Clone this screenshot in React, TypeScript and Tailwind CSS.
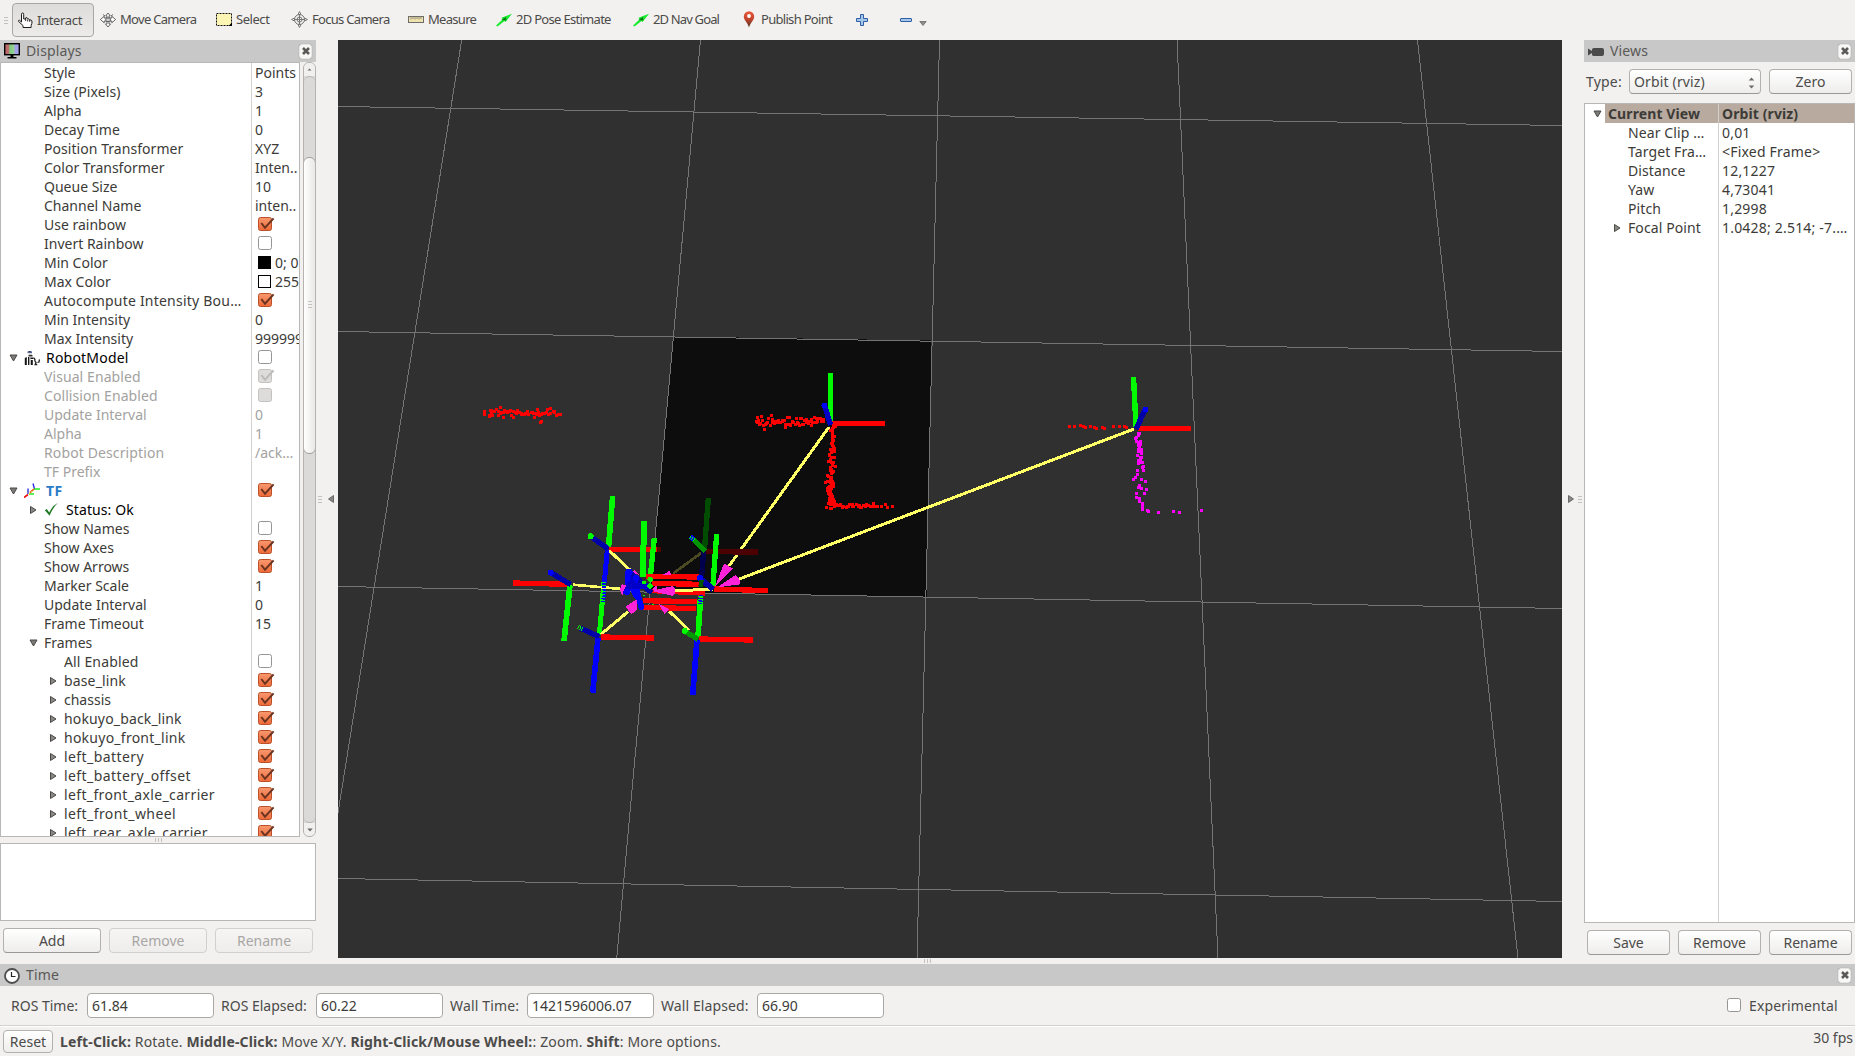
import React from "react";

type Check = "on" | "off" | "disabledOn" | "disabledOff";
type Row = {
  name: string;
  level?: 0 | 1 | 2;
  arrow?: "open" | "closed";
  icon?: "robot" | "tf" | "ok";
  value?: string;
  check?: Check;
  swatch?: "black" | "white";
  dim?: boolean;
  tone?: string;
  track?: string;
};

const ROWS: Row[] = [
  { name: "Style", value: "Points" },
  { name: "Size (Pixels)", value: "3", track: "tracking-[0.1px]" },
  { name: "Alpha", value: "1" },
  { name: "Decay Time", value: "0" },
  { name: "Position Transformer", value: "XYZ", track: "tracking-[0.05px]" },
  { name: "Color Transformer", value: "Inten.." },
  { name: "Queue Size", value: "10" },
  { name: "Channel Name", value: "inten.." },
  { name: "Use rainbow", check: "on" },
  { name: "Invert Rainbow", check: "off" },
  { name: "Min Color", swatch: "black", value: "0; 0" },
  { name: "Max Color", swatch: "white", value: "255" },
  { name: "Autocompute Intensity Bou…", check: "on", track: "tracking-[0.22px]" },
  { name: "Min Intensity", value: "0" },
  { name: "Max Intensity", value: "999999" },
  { name: "RobotModel", level: 0, arrow: "open", icon: "robot", check: "off", tone: "text-black", track: "tracking-[0.2px]" },
  { name: "Visual Enabled", dim: true, check: "disabledOn", track: "tracking-[0.08px]" },
  { name: "Collision Enabled", dim: true, check: "disabledOff", track: "tracking-[0.08px]" },
  { name: "Update Interval", dim: true, value: "0" },
  { name: "Alpha", dim: true, value: "1" },
  { name: "Robot Description", dim: true, value: "/ack…", track: "tracking-[0.12px]" },
  { name: "TF Prefix", dim: true },
  { name: "TF", level: 0, arrow: "open", icon: "tf", check: "on", tone: "font-bold text-[#2a7bc8]", track: "tracking-[0.5px]" },
  { name: "Status: Ok", arrow: "closed", icon: "ok", tone: "text-black", track: "tracking-[0.1px]" },
  { name: "Show Names", check: "off" },
  { name: "Show Axes", check: "on" },
  { name: "Show Arrows", check: "on" },
  { name: "Marker Scale", value: "1" },
  { name: "Update Interval", value: "0" },
  { name: "Frame Timeout", value: "15" },
  { name: "Frames", arrow: "open" },
  { name: "All Enabled", level: 2, check: "off", track: "tracking-[0.15px]" },
  { name: "base_link", level: 2, arrow: "closed", check: "on", track: "tracking-[0.15px]" },
  { name: "chassis", level: 2, arrow: "closed", check: "on" },
  { name: "hokuyo_back_link", level: 2, arrow: "closed", check: "on", track: "tracking-[0.15px]" },
  { name: "hokuyo_front_link", level: 2, arrow: "closed", check: "on", track: "tracking-[0.25px]" },
  { name: "left_battery", level: 2, arrow: "closed", check: "on", track: "tracking-[0.42px]" },
  { name: "left_battery_offset", level: 2, arrow: "closed", check: "on", track: "tracking-[0.42px]" },
  { name: "left_front_axle_carrier", level: 2, arrow: "closed", check: "on", track: "tracking-[0.36px]" },
  { name: "left_front_wheel", level: 2, arrow: "closed", check: "on", track: "tracking-[0.42px]" },
  { name: "left_rear_axle_carrier", level: 2, arrow: "closed", check: "on", track: "tracking-[0.3px]" },
];

function Arrow({ dir }: { dir?: "open" | "closed" }) {
  return (
    <svg className="h-[12px] w-[12px] shrink-0" viewBox="0 0 12 12">
      {dir === "open" && <path d="M2 3h7L5.5 9z" fill="#7d7b78" stroke="#4a4947" strokeWidth="1" />}
      {dir === "closed" && <path d="M2.5 2.5v7L8 6z" fill="#8a8885" stroke="#4a4947" strokeWidth="1" />}
    </svg>
  );
}

function CheckBox({ state }: { state: Check }) {
  const on = state === "on";
  const dis = state === "disabledOn" || state === "disabledOff";
  return (
    <svg className="h-[17px] w-[17px] shrink-0 overflow-visible" viewBox="0 0 17 17">
      <defs>
        <linearGradient id="ck" x1="0" y1="0" x2="0" y2="1">
          <stop offset="0" stopColor="#f8986f" />
          <stop offset="1" stopColor="#ee6a38" />
        </linearGradient>
      </defs>
      <rect
        x="1.5"
        y="1.5"
        width="13"
        height="13"
        rx="2"
        fill={on ? "url(#ck)" : dis ? "#dddcdb" : "#ffffff"}
        stroke={on ? "#bb5029" : dis ? "#c4c2c0" : "#979593"}
      />
      {on && <path d="M4.300 7L8 11.800 16.600 2.400" fill="none" stroke="#6b3421" strokeWidth="2" />}
      {state === "disabledOn" && <path d="M4.300 7L8 11.800 16.600 2.400" fill="none" stroke="#bdbbb9" strokeWidth="2" />}
    </svg>
  );
}

function RowIcon({ kind }: { kind: "robot" | "tf" | "ok" }) {
  if (kind === "robot")
    return (
      <svg className="mr-[6px] h-[16px] w-[16px] shrink-0" viewBox="0 0 16 16">
        <path d="M3.500 1.800Q5.800 0 8 1.800v1H3.500z" fill="#20306e" />
        <path d="M4.500 3.500h3.500v1.200H4.500z" fill="#b9b9b9" />
        <path d="M4.500 5h4v1.500h-4z" fill="#333" />
        <path d="M.8 8l2-1V15H.8zM4 7h1.300v8H4zM6.300 7.500h3V9h-3zM6.800 10h2v5h-2z" fill="#161616" />
        <path d="M9.500 7.800q1.800.8 1.300 2.500 0 1.500 1.200 2l-.8 2.200h2M13.500 12.500l1.500-.5.500-2.500" stroke="#222" strokeWidth="1.300" fill="none" />
        <path d="M5.900 7v7.500" stroke="#999" strokeWidth=".8" />
      </svg>
    );
  if (kind === "tf")
    return (
      <svg className="mr-[6px] h-[16px] w-[16px] shrink-0" viewBox="0 0 16 16" fill="none" strokeWidth="1.300">
        <path d="M10.500 6L9 .5M4 11V5.500" stroke="#2222dd" />
        <path d="M10 6h6M5 11h5" stroke="#22ee22" />
        <path d="M0 14.500L4 11.500M6 9.500L10 6.200" stroke="#ee1010" strokeWidth="1.600" />
        <path d="M5 11l4.500-4.500" stroke="#dddd22" strokeDasharray="1.500 1" />
      </svg>
    );
  return (
    <svg className="mr-[7px] h-[15px] w-[15px] shrink-0" viewBox="0 0 15 15">
      <path d="M.8 8.300L2.800 7l2.500 3.400Q8.500 3.500 14 .8 8.500 6 5.600 13.800z" fill="#1f7a22" />
    </svg>
  );
}

const PAD = ["pl-[7px]", "pl-[27px]", "pl-[47px]"];

function DisplayRow({ r }: { r: Row }) {
  const level = r.level ?? 1;
  return (
    <div className={`flex h-[19px] shrink-0 ${r.dim ? "text-[#a3a2a0]" : ""}`}>
      <div className={`flex w-[251px] shrink-0 items-center border-r border-[#d4d2cf] ${PAD[level]}`}>
        <Arrow dir={r.arrow} />
        <span className="w-[4px] shrink-0" />
        {r.icon && <RowIcon kind={r.icon} />}
        <span className={`whitespace-pre leading-[19px] ${r.tone ?? ""} ${r.track ?? ""}`}>{r.name}</span>
      </div>
      <div className="flex min-w-0 flex-1 items-center overflow-hidden pl-[3px]">
        {r.check && (
          <span className="pl-[2px]">
            <CheckBox state={r.check} />
          </span>
        )}
        {r.swatch && (
          <span
            className={`mr-[4px] ml-[3px] h-[13px] w-[13px] shrink-0 border border-black ${r.swatch === "black" ? "bg-black" : "bg-white"}`}
          />
        )}
        {r.value && <span className="whitespace-pre leading-[19px]">{r.value}</span>}
      </div>
    </div>
  );
}

function CloseButton() {
  return (
    <span className="flex h-[15px] w-[13px] items-center justify-center rounded-[3px] border border-[#e6e5e4] bg-[#f7f7f6] shadow-[0_0_1px_#888]">
      <svg className="h-[8px] w-[8px]" viewBox="0 0 8 8">
        <path d="M1 1l6 6M7 1L1 7" stroke="#5a5957" strokeWidth="2.600" />
      </svg>
    </span>
  );
}

function DockTitle({ icon, title }: { icon: React.ReactNode; title: string }) {
  return (
    <div className="flex h-[22px] shrink-0 items-center bg-[#c8c8c8] pr-[4px] pl-[4px]">
      {icon}
      <span className="-mt-[2px] ml-[6px] flex-1 tracking-[0.15px] text-[#5a5957]">{title}</span>
      <CloseButton />
    </div>
  );
}

function Button({ label, w, disabled }: { label: string; w: string; disabled?: boolean }) {
  return (
    <button
      className={`flex h-[25px] shrink-0 items-center justify-center rounded-[4px] border bg-linear-to-b ${w} ${
        disabled
          ? "border-[#d2d0ce] from-[#f6f5f4] to-[#eeedec] text-[#a8a6a4]"
          : "border-[#b3b1ae] border-b-[#9a9895] from-white to-[#eeedec] text-[#4c4b49]"
      }`}
    >
      {label}
    </button>
  );
}

function Grip({ vertical }: { vertical?: boolean }) {
  return (
    <span className={`flex gap-[2px] ${vertical ? "flex-col" : ""}`}>
      {[0, 1, 2].map((i) => (
        <span key={i} className={`bg-[#c3c1be] ${vertical ? "h-px w-[4px]" : "h-[4px] w-px"}`} />
      ))}
    </span>
  );
}

/* ---------- toolbar ---------- */

function Tool({ icon, label, w }: { icon: React.ReactNode; label: string; w: string }) {
  return (
    <div className={`flex shrink-0 items-center gap-[4px] ${w}`}>
      {icon}
      <span className="whitespace-pre">{label}</span>
    </div>
  );
}

const PoseArrow = () => (
  <svg className="h-[16px] w-[16px]" viewBox="0 0 16 16">
    <path d="M0 13.500L6.500 7.500 5.500 5.800 16 1.700 9.500 10 8.500 9 1.500 14.500z" fill="#19ea2d" />
    <path d="M5.500 8L10 5l.3 3.500z" fill="#0a7a14" />
  </svg>
);

function Toolbar() {
  return (
    <div className="flex h-[40px] shrink-0 items-start text-[13px] tracking-[-0.7px] text-[#4c4b49]">
      <div className="flex h-[40px] w-[12px] items-center justify-center">
        <Grip vertical />
      </div>
      <div className="mt-[3px] flex h-[34px] w-[82px] shrink-0 items-center rounded-[4px] border border-[#a9a7a4] bg-linear-to-b from-[#dedcda] to-[#ecebe9] pl-[4px]">
        <svg className="h-[17px] w-[17px]" viewBox="0 0 17 17">
          <path
            d="M4.500 10V2.200Q4.500 1 5.600 1 6.700 1 6.700 2.200V7h2V5.800q1.500-.6 1.900.6V7q1.600-.6 2 .6V8q1.700-.5 2.300.8.5 2.500-.8 4.700v2H6v-2L1.600 9.500Q1 8.200 2.400 8.200z"
            fill="#fff"
            stroke="#1c1c1c"
          />
          <path d="M8.700 7v2M10.700 7.500v2M12.700 8v1.800" stroke="#1c1c1c" strokeWidth=".9" />
        </svg>
        <span className="ml-[3px] tracking-[-0.35px]">Interact</span>
      </div>
      <div className="flex h-[39px] items-center pl-[6px]">
        <Tool
          w="w-[116px]"
          label="Move Camera"
          icon={
            <svg className="h-[16px] w-[16px]" viewBox="0 0 16 16" fill="#fff" stroke="#555" strokeWidth=".9">
              <path d="M8 1l2.200 2.800H9V6h2.800V4.300L15.600 7.500l-3.800 3.300V9H9v3h1.500L8 15l-2.500-3H7V9H4.200v1.800L.4 7.500l3.800-3.200V6H7V3.800H5.800z" />
              <rect x="5.800" y="6" width="4.600" height="3.500" rx=".8" fill="#ccc" />
              <path d="M3 2.500l2 1.500M13 2.500l-2 1.500" />
            </svg>
          }
        />
        <Tool
          w="w-[75px] tracking-[-0.45px]"
          label="Select"
          icon={
            <svg className="h-[13px] w-[16px]" viewBox="0 0 16 13">
              <rect x=".5" y=".5" width="15" height="12" fill="#fdf5b4" stroke="#111" strokeDasharray="2 1" />
              <path d="M16 9.500V13h-3.500z" fill="#000" />
            </svg>
          }
        />
        <Tool
          w="w-[117px]"
          label="Focus Camera"
          icon={
            <svg className="h-[17px] w-[17px]" viewBox="0 0 17 17" fill="none" stroke="#777">
              <circle cx="8.500" cy="8.500" r="5" />
              <circle cx="8.500" cy="8.500" r="2.500" />
              <path d="M8.500 .5L10 3.500H7zM8.500 16.500L10 13.500H7zM.5 8.500L3.500 7v3zM16.500 8.500L13.500 7v3z" fill="#eee" />
              <path d="M8.500 4v9M4 8.500h9" />
            </svg>
          }
        />
        <Tool
          w="w-[88px]"
          label="Measure"
          icon={
            <svg className="h-[7px] w-[16px]" viewBox="0 0 16 7">
              <rect x=".5" y=".5" width="15" height="6" fill="#eee2ae" stroke="#6e6c66" />
              <path d="M3 1v2.500M5 1v2M7 1v2.500M9 1v2M11 1v2.500M13 1v2" stroke="#7d7a6b" strokeWidth=".8" />
            </svg>
          }
        />
        <Tool w="w-[137px]" label="2D Pose Estimate" icon={<PoseArrow />} />
        <Tool w="w-[110px] tracking-[-0.85px]" label="2D Nav Goal" icon={<PoseArrow />} />
        <Tool
          w="w-[113px]"
          label="Publish Point"
          icon={
            <svg className="h-[17px] w-[14px]" viewBox="1.500 0 14 17">
              <defs>
                <linearGradient id="pin" x1="0" y1="0" x2="0" y2="1">
                  <stop offset="0" stopColor="#ea5a3a" />
                  <stop offset=".5" stopColor="#c2432b" />
                  <stop offset="1" stopColor="#4a3526" />
                </linearGradient>
              </defs>
              <path d="M7.500 16.500C6.500 12 2.300 9.500 2.300 5.500a5.200 5.200 0 0110.400 0c0 4-4.200 6.500-5.200 11z" fill="url(#pin)" />
              <circle cx="7.500" cy="5" r="1.900" fill="#fff" />
            </svg>
          }
        />
        <svg className="h-[12px] w-[12px]" viewBox="0 0 12 12">
          <path d="M4.500 .5h3v4h4v3h-4v4h-3v-4h-4v-3h4z" fill="#a6c6ea" stroke="#2f5fa4" />
        </svg>
        <svg className="ml-[32px] h-[4px] w-[12px]" viewBox="0 0 12 4">
          <rect x=".5" y=".5" width="11" height="3" rx=".5" fill="#a6c6ea" stroke="#2f5fa4" />
        </svg>
        <svg className="mt-[7px] ml-[7px] h-[5px] w-[8px]" viewBox="0 0 8 5">
          <path d="M.8 .5h6.400L4 4.500z" fill="#8f8d8a" stroke="#6b6967" strokeWidth=".8" />
        </svg>
      </div>
    </div>
  );
}

/* ---------- 3D view ---------- */

type P = [number, number];

function scatter(seed: number, n: number, a: P, b: P, sx: number, sy: number): P[] {
  let s = seed;
  const rnd = () => {
    s = (s * 1103515245 + 12345) % 2147483648;
    return s / 2147483648;
  };
  return Array.from({ length: n }, (_, i) => {
    const t = (i + rnd() * 0.8) / n;
    const jx = (rnd() + rnd() - 1) * sx;
    const jy = (rnd() + rnd() - 1) * sy;
    return [Math.round(a[0] + (b[0] - a[0]) * t + jx), Math.round(a[1] + (b[1] - a[1]) * t + jy)] as P;
  });
}

const RED: P[] = [
  ...scatter(7, 50, [488, 412], [560, 413], 1, 4),
  [484, 411], [484, 414], [490, 410], [489, 416], [500, 407], [537, 409], [550, 408], [503, 417], [513, 417], [534, 417], [541, 421], [540, 422],
  ...scatter(21, 62, [755, 421], [824, 422], 1, 6),
  [764, 429], [757, 417], [761, 416],
  ...scatter(33, 58, [832, 425], [830, 500], 5, 2),
  ...scatter(44, 24, [830, 478], [829, 505], 6, 2),
  ...scatter(57, 38, [826, 505], [877, 506], 1, 4),
  [881, 506], [885, 504], [887, 507], [892, 506],
  [1069, 426], [1074, 426], [1080, 425], [1083, 426], [1085, 427], [1090, 426], [1094, 427], [1096, 428],
  [1102, 427], [1104, 428], [1113, 426], [1119, 426], [1124, 426], [1126, 427],
];

const MAGENTA: P[] = [
  ...scatter(5, 26, [1138, 432], [1141, 468], 3.5, 1),
  [1137, 470], [1143, 470], [1137, 474], [1135, 477], [1133, 479], [1141, 479], [1145, 481], [1139, 485],
  [1138, 487], [1141, 488], [1146, 489], [1136, 493], [1144, 493], [1136, 497], [1139, 498], [1139, 501],
  [1142, 503], [1142, 505], [1142, 507], [1142, 509], [1147, 510], [1148, 511], [1158, 512], [1173, 511],
  [1179, 512], [1201, 510],
];

function Points({ pts, color }: { pts: P[]; color: string }) {
  return <path fill={color} d={pts.map(([x, y]) => `M${x - 1} ${y - 1}h3v3h-3z`).join("")} />;
}

/* Line segments of the robot cluster: x1, y1, x2, y2, colour, width */
type Seg = [number, number, number, number, string, number];
const G = "#00fa00";
const R = "#ff0000";
const B = "#0000fb";
const DB = "#0000a8";
const Y = "#ffff66";
const PK = "#ff22d8";

const CLUSTER: Seg[] = [
  [520, 280, 606, 217, "#4b4a22", 8],
  [625, 55, 613, 214, "#004c00", 16],
  [618, 215, 775, 216, "#4c0000", 16],
  [611, 214, 604, 300, "#00004c", 16],
  [470, 210, 484, 210, "#5a0000", 15],
  [338, 48, 325, 208, G, 17],
  [328, 208, 470, 210, R, 15],
  [322, 210, 313, 308, B, 15],
  [312, 306, 298, 465, G, 15],
  [272, 169, 325, 207, DB, 16],
  [328, 212, 392, 272, Y, 9],
  [39, 309, 210, 313, R, 16],
  [210, 316, 192, 483, G, 17],
  [150, 276, 212, 314, DB, 16],
  [218, 314, 365, 327, Y, 8],
  [303, 463, 384, 395, Y, 9],
  [302, 471, 463, 474, R, 16],
  [294, 474, 278, 638, B, 17],
  [240, 444, 298, 470, DB, 16],
  [508, 394, 568, 452, Y, 9],
  [602, 345, 594, 472, G, 17],
  [597, 477, 758, 480, R, 16],
  [591, 480, 578, 645, B, 17],
  [554, 453, 594, 478, "#009a00", 16],
  [431, 124, 430, 290, G, 18],
  [463, 174, 450, 300, G, 16],
  [437, 289, 597, 291, R, 16],
  [455, 310, 597, 313, R, 16],
  [452, 333, 614, 341, R, 13],
  [430, 362, 592, 365, R, 16],
  [424, 382, 588, 386, R, 16],
  [522, 332, 640, 328, Y, 9],
  [650, 162, 638, 328, G, 16],
  [642, 327, 805, 332, R, 16],
  [600, 295, 640, 328, DB, 17],
  [576, 174, 615, 214, "#009400", 15],
];

function Cluster() {
  return (
    <g transform="translate(500 480) scale(.33333)">
      {CLUSTER.map(([x1, y1, x2, y2, c, w], i) => (
        <line key={i} x1={x1} y1={y1} x2={x2} y2={y2} stroke={c} strokeWidth={w} />
      ))}
      <g fill={PK}>
        <path d="M456 333L518 318Q534 333 518 348z" />
        <path d="M645 320L672 250 699 266z" />
        <path d="M652 322L706 285Q724 298 720 313z" />
        <path d="M412 356L376 380 394 403 412 388z" />
        <path d="M360 330L366 312 390 322 384 340 366 344z" />
        <path d="M476 372L508 388 494 403z" />
        <path d="M486 286L508 273 516 286zM396 278L404 270 416 284zM455 328l16-12v14z" />
      </g>
      <g stroke={B} strokeWidth="17" strokeLinecap="round">
        <path d="M388 275L450 333" stroke={DB} />
        <path d="M384 300L410 350M385 275L384 310M404 305L424 382" />
        <path d="M385 318L440 318M378 336L400 300" stroke="#0000c8" />
      </g>
      <g fill={B}>
        <circle cx="388" cy="276" r="10" />
        <circle cx="408" cy="294" r="9" />
        <circle cx="381" cy="336" r="9" />
        <circle cx="152" cy="278" r="9" />
        <circle cx="600" cy="294" r="9" />
        <circle cx="576" cy="174" r="8" />
      </g>
      <g fill={G}>
        <circle cx="272" cy="169" r="9" />
        <circle cx="554" cy="453" r="9" />
        <circle cx="451" cy="298" r="8" />
        <circle cx="450" cy="318" r="8" />
        <circle cx="432" cy="308" r="6" />
        <path d="M428 344h8v4h-8zM455 372h8v4h-8z" />
      </g>
      {/* depth-fighting speckle where two axes overlap */}
      <path d="M313 310L309 366" stroke={B} strokeWidth="13" strokeDasharray="4 5" />
      <path d="M307 330L304 368" stroke={G} strokeWidth="6" strokeDasharray="3 4" />
      <path d="M604 300L602 320" stroke="#005500" strokeWidth="14" />
      <path d="M603 345L600 374" stroke={B} strokeWidth="14" strokeDasharray="4 4" />
      <path d="M234 441L248 447" stroke={G} strokeWidth="12" strokeDasharray="3 3" />
      <path d="M569 172l14 8" stroke={G} strokeWidth="10" strokeDasharray="3 4" />
    </g>
  );
}

function View3D() {
  return (
    <svg className="h-[918px] w-[1224px] shrink-0 bg-[#303030]" viewBox="338 40 1224 918" shapeRendering="crispEdges">
      <path d="M673.500 336.500L931.500 340.500 926.500 597.500 650 592z" fill="#0d0d0d" />
      <g stroke="#747474" strokeWidth="1" fill="none">
        <path d="M461.700 40L338 813M700.500 40L616.700 958M939.500 40L917 958M1177 40L1218 958M1417.500 40L1518 958" />
        <path d="M338 106.500L1562 125.500M338 331.500L1562 351.500M338 586.500L1562 608.500M338 878.500L1562 901.500" />
      </g>
      <Points pts={RED} color="#ff0000" />
      <Points pts={MAGENTA} color="#ff00ff" />
      <g stroke={Y} strokeWidth="3">
        <path d="M829 427L729 566M1134 429L738 579.500" />
      </g>
      <Cluster />
      <g strokeWidth="5.400">
        <path d="M830.700 373V421" stroke={G} />
        <path d="M832 423.300H884.500" stroke={R} />
        <path d="M824.500 405L830.500 425" stroke="#0000c4" />
        <path d="M1133.500 377L1136 427" stroke={G} />
        <path d="M1138 428.300H1191" stroke={R} />
        <path d="M1145 410L1136 429" stroke="#0000a8" />
      </g>
      <circle cx="824.500" cy="405.500" r="3" fill={B} />
      <circle cx="1145.500" cy="409.500" r="3" fill={B} />
    </svg>
  );
}

/* ---------- docks ---------- */

function ScrollBar() {
  return (
    <div className="ml-[3px] flex w-[13px] shrink-0 flex-col overflow-hidden rounded-[6px] border border-[#b5b3b0] bg-[#dbdad8]">
      <div className="flex h-[13px] shrink-0 items-center justify-center bg-[#f1f0ef]">
        <svg className="h-[3px] w-[5px]" viewBox="0 0 5 3">
          <path d="M.5 2.500L2.500 .5l2 2z" fill="#6c6a68" />
        </svg>
      </div>
      <div className="h-[81px] shrink-0 rounded-t-[6px] border-t border-[#b5b3b0]" />
      <div className="-mx-px flex h-[297px] shrink-0 flex-col items-center rounded-[6px] border border-[#a3a19e] bg-linear-to-r from-white to-[#e9e8e6] pt-[143px]">
        <Grip vertical />
      </div>
      <div className="flex-1 rounded-b-[6px] border-b border-[#b5b3b0]" />
      <div className="flex h-[13px] shrink-0 items-center justify-center bg-[#f1f0ef]">
        <svg className="h-[4px] w-[6px]" viewBox="0 0 6 4">
          <path d="M.3 .5h5.400L3 3.500z" fill="#6c6a68" />
        </svg>
      </div>
    </div>
  );
}

function DisplaysDock() {
  return (
    <div className="flex w-[316px] shrink-0 flex-col">
      <DockTitle
        title="Displays"
        icon={
          <svg className="h-[16px] w-[16px]" viewBox="0 0 16 16">
            <defs>
              <linearGradient id="scr" x1="0" y1="0" x2="1" y2="0">
                <stop offset=".25" stopColor="#bd6a6a" />
                <stop offset=".35" stopColor="#7fc97f" />
                <stop offset=".6" stopColor="#93d293" />
                <stop offset=".72" stopColor="#a3a3ea" />
              </linearGradient>
            </defs>
            <rect x=".7" y=".7" width="14.600" height="11" fill="url(#scr)" stroke="#000" strokeWidth="1.400" />
            <path d="M6.500 12h3v2h3v1.500h-9V14h3z" fill="#000" />
          </svg>
        }
      />
      <div className="flex h-[775px] shrink-0">
        <div className="flex w-[300px] shrink-0 flex-col overflow-hidden border border-[#b9b7b3] bg-white text-[#3c3b37]">
          {ROWS.map((r, i) => (
            <DisplayRow key={i} r={r} />
          ))}
        </div>
        <ScrollBar />
      </div>
      <div className="flex h-[6px] shrink-0 items-center justify-center">
        <Grip />
      </div>
      <div className="h-[78px] shrink-0 border border-[#b9b7b3] bg-white" />
      <div className="mt-[7px] flex gap-[8px] pl-[3px]">
        <Button label="Add" w="w-[98px]" />
        <Button label="Remove" w="w-[98px]" disabled />
        <Button label="Rename" w="w-[98px]" disabled />
      </div>
    </div>
  );
}

const VIEW_ROWS: { name: string; value: string; arrow?: "closed" }[] = [
  { name: "Near Clip …", value: "0,01" },
  { name: "Target Fra…", value: "<Fixed Frame>" },
  { name: "Distance", value: "12,1227" },
  { name: "Yaw", value: "4,73041" },
  { name: "Pitch", value: "1,2998" },
  { name: "Focal Point", value: "1.0428; 2.514; -7.…", arrow: "closed" },
];

function ViewsDock() {
  return (
    <div className="flex w-[271px] shrink-0 flex-col">
      <DockTitle
        title="Views"
        icon={
          <svg className="mt-px h-[10px] w-[16px]" viewBox="0 0 16 10">
            <path d="M0 1.500L4 4V2.500Q4 1 6 1h8q2 0 2 2v4q0 2-2 2H6Q4 9 4 7.500V6L0 8.500z" fill="#4a4a4a" />
          </svg>
        }
      />
      <div className="mt-[7px] flex h-[25px] items-center pl-[2px] text-[#4c4b49]">
        <span className="w-[43px] tracking-[0.2px]">Type:</span>
        <div className="flex h-[25px] w-[132px] items-center justify-between rounded-[4px] border border-[#b3b1ae] border-b-[#9a9895] bg-linear-to-b from-white to-[#eeedec] pr-[5px] pl-[4px]">
          <span className="tracking-[0.15px]">Orbit (rviz)</span>
          <svg className="mt-[3px] h-[12px] w-[7px]" viewBox="0 0 7 12">
            <path d="M.7 3.500L3.500 .5l2.800 3zM.7 8.500h5.600l-2.800 3z" fill="#6c6a68" />
          </svg>
        </div>
        <span className="w-[8px]" />
        <Button label="Zero" w="w-[83px]" />
      </div>
      <div className="mt-[9px] flex h-[820px] shrink-0 border border-[#b9b7b3] bg-white text-[#3c3b37]">
        <div className="flex w-[134px] shrink-0 flex-col border-r border-[#d4d2cf]">
          <div className="flex h-[19px] items-center pl-[7px]">
            <Arrow dir="open" />
            <span className="ml-px h-[19px] flex-1 bg-[#b8aa9f] pl-[3px] leading-[19px] font-bold tracking-[0.1px]">
              Current View
            </span>
          </div>
          {VIEW_ROWS.map((r) => (
            <div key={r.name} className="flex h-[19px] items-center pl-[27px] whitespace-pre">
              <Arrow dir={r.arrow} />
              <span className="ml-[4px] tracking-[0.1px]">{r.name}</span>
            </div>
          ))}
        </div>
        <div className="flex flex-1 flex-col overflow-hidden">
          <div className="h-[19px] bg-[#b8aa9f] pl-[3px] leading-[19px] font-bold tracking-[0.1px]">Orbit (rviz)</div>
          {VIEW_ROWS.map((r) => (
            <div key={r.name} className="h-[19px] pl-[3px] leading-[19px] tracking-[0.2px] whitespace-pre">
              {r.value}
            </div>
          ))}
        </div>
      </div>
      <div className="mt-[7px] flex gap-[8px] pl-[3px]">
        <Button label="Save" w="w-[83px]" />
        <Button label="Remove" w="w-[83px]" />
        <Button label="Rename" w="w-[83px]" />
      </div>
    </div>
  );
}

function Field({ label, value, lw }: { label: string; value: string; lw: string }) {
  return (
    <>
      <span className={`shrink-0 whitespace-pre ${lw}`}>{label}</span>
      <div className="mr-[7px] flex h-[25px] w-[127px] shrink-0 items-center rounded-[4px] border border-[#aaa8a5] bg-white pl-[4px] text-[#3c3b37]">
        {value}
      </div>
    </>
  );
}

export default function App() {
  return (
    <div className="flex h-[1056px] w-[1855px] flex-col overflow-hidden bg-[#f2f1f0] font-['Noto_Sans',sans-serif] text-[14px] leading-[19px] text-[#4c4b49]">
      <Toolbar />
      <div className="flex h-[918px] shrink-0">
        <DisplaysDock />
        <div className="flex w-[22px] shrink-0 items-center gap-[6px] pl-[2px]">
          <Grip vertical />
          <svg className="h-[8px] w-[6px]" viewBox="0 0 6 8">
            <path d="M5.500 .5v7L.5 4z" fill="#8a8885" stroke="#555" strokeWidth=".8" />
          </svg>
        </div>
        <View3D />
        <div className="flex w-[22px] shrink-0 items-center justify-end gap-[4px] pr-[2px]">
          <svg className="h-[8px] w-[6px]" viewBox="0 0 6 8">
            <path d="M.5 .5v7l5-3.500z" fill="#8a8885" stroke="#555" strokeWidth=".8" />
          </svg>
          <Grip vertical />
        </div>
        <ViewsDock />
      </div>
      <div className="flex h-[6px] shrink-0 items-center justify-center">
        <Grip />
      </div>
      <DockTitle
        title="Time"
        icon={
          <svg className="mt-px h-[16px] w-[16px]" viewBox="0 0 16 16">
            <circle cx="8" cy="8" r="7" fill="#fff" stroke="#4d4d4d" strokeWidth="1.800" />
            <path d="M7.500 4v4.500h4" fill="none" stroke="#222" strokeWidth="1.200" />
          </svg>
        }
      />
      <div className="mt-[7px] flex h-[33px] shrink-0 items-start border-b border-[#d3d1ce] pl-[11px]">
        <div className="flex h-[25px] flex-1 items-center">
          <Field label="ROS Time:" value="61.84" lw="w-[76px]" />
          <Field label="ROS Elapsed:" value="60.22" lw="w-[95px]" />
          <Field label="Wall Time:" value="1421596006.07" lw="w-[77px] tracking-[0.15px]" />
          <Field label="Wall Elapsed:" value="66.90" lw="w-[96px] tracking-[0.1px]" />
          <span className="flex-1" />
          <CheckBox state="off" />
          <span className="ml-[6px] w-[106px] tracking-[0.12px]">Experimental</span>
        </div>
      </div>
      <div className="flex flex-1 items-start border-t border-white pl-[3px]">
        <button className="mt-[3px] flex h-[23px] w-[50px] items-center justify-center rounded-[4px] border border-[#b3b1ae] bg-linear-to-b from-white to-[#eeedec]">
          Reset
        </button>
        <p className="mt-[5px] ml-[7px] flex-1 tracking-[0.15px] whitespace-pre">
          <b>Left-Click:</b> Rotate. <b>Middle-Click:</b> Move X/Y. <b>Right-Click/Mouse Wheel:</b>: Zoom. <b>Shift</b>: More
          options.
        </p>
        <span className="mt-px pr-[2px]">30 fps</span>
      </div>
    </div>
  );
}
